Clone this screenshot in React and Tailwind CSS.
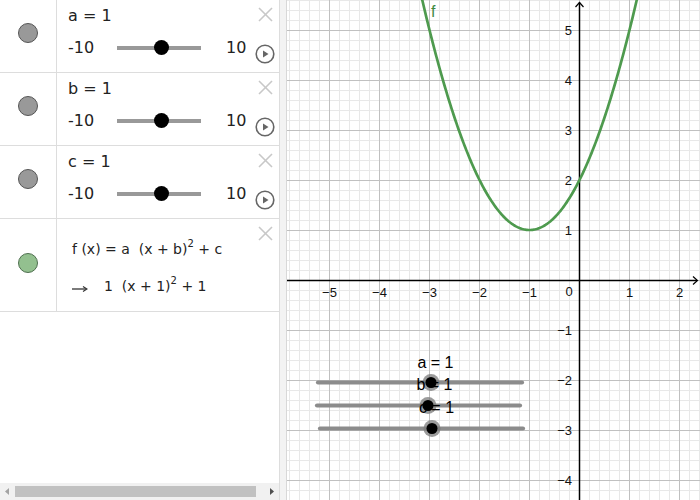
import React from 'react';

const GREEN = '#4e9a4e';

function XIcon() {
  return (
    <svg width="15" height="15" viewBox="0 0 15 15">
      <line x1="1" y1="1" x2="14" y2="14" stroke="#c8c8c8" strokeWidth="1.6" />
      <line x1="14" y1="1" x2="1" y2="14" stroke="#c8c8c8" strokeWidth="1.6" />
    </svg>
  );
}

function PlayIcon() {
  return (
    <svg width="20" height="20" viewBox="0 0 20 20">
      <circle cx="10" cy="10" r="8.8" fill="none" stroke="#666" strokeWidth="1.6" />
      <polygon points="8,6.5 8,13.5 13.5,10" fill="#666" />
    </svg>
  );
}

function SliderRow({ name }) {
  return (
    <div className="flex h-[73px] border-b border-[#dddddd]">
      <div className="w-[57px] shrink-0 border-r border-[#dddddd] flex justify-center pt-[23px]">
        <div className="w-[20px] h-[20px] rounded-full bg-[#999999] border border-[#555555]" />
      </div>
      <div className="flex-1 flex">
        <div className="flex-1 pl-[11px] pt-[6px] text-[#222]">
          <div className="text-[16px] leading-[19px]">{name} = 1</div>
          <div className="flex items-center h-[18px] mt-[14px] text-[16px]">
            <div className="w-[49px]">-10</div>
            <div className="relative w-[84px] h-[4px] bg-[#999999]">
              <div className="absolute left-[37px] top-[-6px] w-[15px] h-[15px] rounded-full bg-black" />
            </div>
            <div className="ml-[25px]">10</div>
          </div>
        </div>
        <div className="w-[22px] mr-[3px] flex flex-col items-center pt-[7px]">
          <XIcon />
          <div className="mt-[22px]">
            <PlayIcon />
          </div>
        </div>
      </div>
    </div>
  );
}

function Arrow() {
  return (
    <svg width="16" height="8" viewBox="0 0 16 8" className="mt-[6px]">
      <line x1="0" y1="4" x2="14" y2="4" stroke="#333" strokeWidth="1.3" />
      <polyline points="11,1.5 15,4 11,6.5" fill="none" stroke="#333" strokeWidth="1.2" />
    </svg>
  );
}

function FormulaRow() {
  return (
    <div className="flex h-[93px] border-b border-[#dddddd]">
      <div className="w-[57px] shrink-0 border-r border-[#dddddd] flex justify-center pt-[34px]">
        <div className="w-[20px] h-[20px] rounded-full bg-[#93c08f] border border-[#4f6f4f]" />
      </div>
      <div className="flex-1 flex">
        <div className="flex-1 pl-[15px] pt-[18px] text-[#222] text-[14px]">
          <div className="h-[24px] flex items-center whitespace-pre">
            <span>f (x) = a  (x + b)</span>
            <sup className="text-[10px]">2</sup>
            <span> + c</span>
          </div>
          <div className="h-[24px] mt-[13px] flex items-center whitespace-pre">
            <Arrow />
            <span className="ml-[16px]">1  (x + 1)</span>
            <sup className="text-[10px]">2</sup>
            <span> + 1</span>
          </div>
        </div>
        <div className="w-[22px] mr-[3px] flex flex-col items-center pt-[7px]">
          <XIcon />
        </div>
      </div>
    </div>
  );
}

function Scrollbar() {
  return (
    <div className="h-[17px] bg-[#f1f1f1] flex items-center pl-[5px]">
      <svg width="4" height="7" viewBox="0 0 4 7">
        <polygon points="4,0 4,7 0,3.5" fill="#a3a3a3" />
      </svg>
      <div className="ml-[6px] w-[241px] h-[11px] bg-[#c1c1c1]" />
      <svg width="4" height="7" viewBox="0 0 4 7" className="ml-[14px]">
        <polygon points="0,0 0,7 4,3.5" fill="#505050" />
      </svg>
    </div>
  );
}

function Graph() {
  const ox = 579.5;
  const oy = 280;
  const vlines = [];
  for (let k = -30; k <= 13; k++) {
    const x = ox + 10 * k;
    if (x < 287 || x > 700) continue;
    vlines.push({ x, major: k % 5 === 0 });
  }
  const hlines = [];
  for (let k = -28; k <= 23; k++) {
    const y = oy + 10 * k + 0.5;
    if (y < 0 || y > 500) continue;
    hlines.push({ y, major: k % 5 === 0 });
  }
  const pts = [];
  for (let i = 0; i <= 220; i++) {
    const x = -3.2 + i * 0.02;
    const y = (x + 1) * (x + 1) + 1;
    pts.push(`${(ox + 50 * x).toFixed(2)},${(oy - 50 * y).toFixed(2)}`);
  }
  const xLabels = [
    { v: -5, t: '\u22125' },
    { v: -4, t: '\u22124' },
    { v: -3, t: '\u22123' },
    { v: -2, t: '\u22122' },
    { v: -1, t: '\u22121' },
    { v: 1, t: '1' },
    { v: 2, t: '2' },
  ];
  const yLabels = [
    { v: 5, t: '5' },
    { v: 4, t: '4' },
    { v: 3, t: '3' },
    { v: 2, t: '2' },
    { v: 1, t: '1' },
    { v: -1, t: '\u22121' },
    { v: -2, t: '\u22122' },
    { v: -3, t: '\u22123' },
    { v: -4, t: '\u22124' },
  ];
  const sliders = [
    { y: 382.5, x1: 318, x2: 522, kx: 431, label: 'a = 1', lx: 435.5, ly: 367.5 },
    { y: 405.5, x1: 317, x2: 520, kx: 428, label: 'b = 1', lx: 434.5, ly: 390 },
    { y: 428.5, x1: 320, x2: 523, kx: 432, label: 'c = 1', lx: 436.5, ly: 413 },
  ];
  return (
    <svg width="413" height="500" viewBox="287 0 413 500" className="block">
      <rect x="287" y="0" width="413" height="500" fill="#fff" />
      {vlines.filter((l) => !l.major).map((l) => (
        <line key={'vm' + l.x} x1={l.x} y1="0" x2={l.x} y2="500" stroke="#e8e8e8" strokeWidth="1" />
      ))}
      {hlines.filter((l) => !l.major).map((l) => (
        <line key={'hm' + l.y} x1="287" y1={l.y} x2="700" y2={l.y} stroke="#e8e8e8" strokeWidth="1" />
      ))}
      {vlines.filter((l) => l.major).map((l) => (
        <line key={'vM' + l.x} x1={l.x} y1="0" x2={l.x} y2="500" stroke="#c0c0c0" strokeWidth="1" />
      ))}
      {hlines.filter((l) => l.major).map((l) => (
        <line key={'hM' + l.y} x1="287" y1={l.y} x2="700" y2={l.y} stroke="#c0c0c0" strokeWidth="1" />
      ))}
      <line x1="287" y1="280.5" x2="697" y2="280.5" stroke="#000" strokeWidth="1.5" />
      <line x1={ox} y1="2.5" x2={ox} y2="500" stroke="#000" strokeWidth="1.5" />
      <polyline points="575.5,7 579.5,2.5 583.5,7" fill="none" stroke="#000" strokeWidth="1.2" />
      <polyline points="693,276.5 697.5,280.5 693,284.5" fill="none" stroke="#000" strokeWidth="1.2" />
      <g fontFamily="'Liberation Sans', Arial, sans-serif" fontSize="13" fill="#111">
        {xLabels.map((l) => (
          <text key={'xl' + l.v} x={ox + 50 * l.v} y="297" textAnchor="middle">{l.t}</text>
        ))}
        <text x="569" y="296" textAnchor="middle">0</text>
        {yLabels.map((l) => (
          <text key={'yl' + l.v} x="572" y={oy - 50 * l.v + 5} textAnchor="end">{l.t}</text>
        ))}
      </g>
      <polyline points={pts.join(' ')} fill="none" stroke={GREEN} strokeWidth="2.7" strokeLinejoin="round" />
      <text x="431" y="16.5" fontFamily="'Liberation Sans', Arial, sans-serif" fontSize="16" fill="#3f8a3f">f</text>
      {sliders.map((s) => (
        <line key={'st' + s.y} x1={s.x1} y1={s.y} x2={s.x2} y2={s.y} stroke="#8c8c8c" strokeWidth="4.2" strokeLinecap="round" />
      ))}
      {sliders.map((s) => (
        <g key={'sk' + s.y}>
          <circle cx={s.kx} cy={s.y} r="8.5" fill="#7a7a7a" fillOpacity="0.75" />
          <circle cx={s.kx} cy={s.y} r="5.5" fill="#000" />
        </g>
      ))}
      <g fontFamily="'Liberation Sans', Arial, sans-serif" fontSize="16" fill="#000">
        {sliders.map((s) => (
          <text key={'sl' + s.y} x={s.lx} y={s.ly} textAnchor="middle">{s.label}</text>
        ))}
      </g>
    </svg>
  );
}

export default function App() {
  return (
    <div className="w-[700px] h-[500px] flex overflow-hidden bg-white font-['DejaVu_Sans',sans-serif]">
      <div className="w-[280px] shrink-0 h-full flex flex-col border-r border-[#dddddd]">
        <SliderRow name="a" />
        <SliderRow name="b" />
        <SliderRow name="c" />
        <FormulaRow />
        <div className="flex-1" />
        <Scrollbar />
      </div>
      <div className="w-[7px] shrink-0 h-full bg-[#f3f3f3] border-r border-[#d8d8d8]" />
      <div className="flex-1 h-full">
        <Graph />
      </div>
    </div>
  );
}
